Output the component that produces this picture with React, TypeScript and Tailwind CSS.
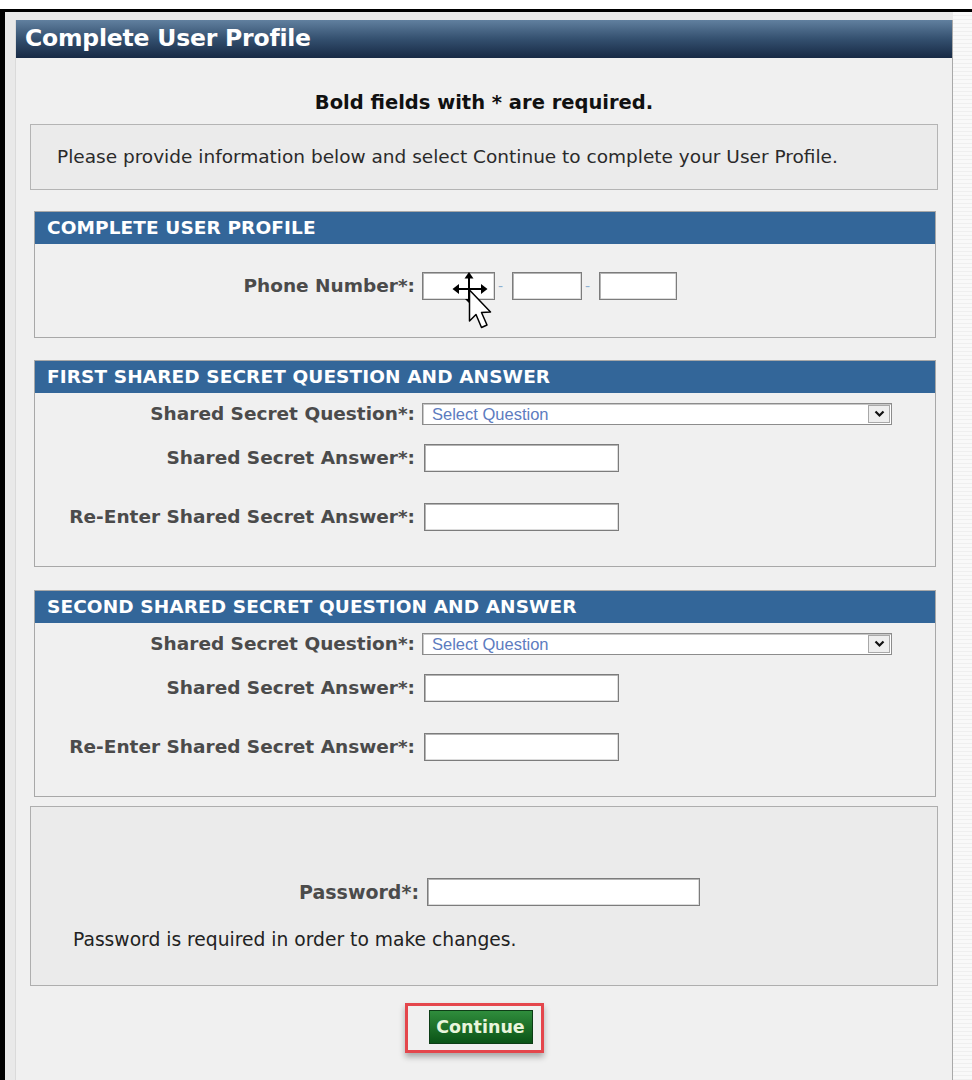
import React from "react";

function TextBox({ w }: { w: string }) {
  return (
    <div
      className={`${w} h-[28px] bg-white border border-[#7c7c7c] shadow-[inset_1px_1px_0_#b4b4b4,inset_-1px_-1px_0_#dcdcdc]`}
    />
  );
}

function QuestionSelect() {
  return (
    <div className="w-[470px] h-[22px] bg-white border border-[#8c8c8c] shadow-[inset_1px_1px_0_#c8c8c8] flex items-center">
      <span className="flex-1 pl-[9px] text-[16.5px] leading-[20px] text-[#5d7cbf] font-['Liberation_Sans',Arial,sans-serif]">
        Select Question
      </span>
      <div className="w-[22px] h-[18px] mr-[1px] bg-[#eeeeee] border border-[#a8a8a8] flex items-center justify-center">
        <svg width="11" height="8" viewBox="0 0 11 8">
          <path d="M1.5 1.5 L5.5 5.5 L9.5 1.5" fill="none" stroke="#111" strokeWidth="2.2" />
        </svg>
      </div>
    </div>
  );
}

function SectionHeader({ title }: { title: string }) {
  return (
    <div className="h-[32px] bg-[#336699] flex items-center pl-[12px] text-white text-[18.5px] font-bold tracking-[0.1px]">
      {title}
    </div>
  );
}

function Label({ children }: { children: React.ReactNode }) {
  return (
    <div className="w-[387px] shrink-0 whitespace-nowrap text-right text-[18.5px] leading-[22px] font-bold text-[#4b4b4b] pr-[7px]">
      {children}
    </div>
  );
}

function SecretSection({ title }: { title: string }) {
  return (
    <div className="ml-[18px] mr-[16px] border border-[#a8a8a8] bg-[#f0f0f0]">
      <SectionHeader title={title} />
      <div className="pt-[10px] pb-[35px] flex flex-col">
        <div className="flex items-center h-[22px]">
          <Label>Shared Secret Question*:</Label>
          <QuestionSelect />
        </div>
        <div className="flex items-center h-[28px] mt-[19px]">
          <Label>Shared Secret Answer*:</Label>
          <div className="ml-[2px]">
            <TextBox w="w-[195px]" />
          </div>
        </div>
        <div className="flex items-center h-[28px] mt-[31px]">
          <Label>Re-Enter Shared Secret Answer*:</Label>
          <div className="ml-[2px]">
            <TextBox w="w-[195px]" />
          </div>
        </div>
      </div>
    </div>
  );
}

export default function App() {
  return (
    <div className="h-[1080px] overflow-hidden bg-white pt-[9px] font-['DejaVu_Sans',Verdana,sans-serif]">
      <div className="flex h-[1071px] border-t-[3px] border-black">
        <div className="w-[953px] shrink-0 border-l-[5px] border-black bg-[#e9e9e9] pl-[10px] pt-[8px]">
          <div className="h-full bg-[#f0f0f0] border-l border-[#dadada] border-r border-r-[#a9a9a9] flex flex-col">
            {/* page title bar */}
            <div className="h-[38px] bg-gradient-to-b from-[#61809f] via-[#34506f] to-[#172a45] flex items-center pl-[9px] text-white text-[23.5px] font-bold tracking-[-0.2px]">
              Complete User Profile
            </div>

            <div className="mt-[36px] text-center text-[19.5px] leading-[18px] font-bold text-[#111]">
              Bold fields with * are required.
            </div>

            <div className="mt-[12px] ml-[14px] mr-[14px] h-[66px] bg-[#ebebeb] border border-[#b4b4b4] flex items-center pl-[26px] text-[18.5px] text-[#2a2a2a] whitespace-nowrap">
              Please provide information below and select Continue to complete your User Profile.
            </div>

            {/* phone number */}
            <div className="mt-[21px] ml-[18px] mr-[16px] border border-[#a8a8a8] bg-[#f0f0f0]">
              <SectionHeader title="COMPLETE USER PROFILE" />
              <div className="h-[93px] pt-[28px]">
                <div className="relative flex items-center h-[28px]">
                  <Label>Phone Number*:</Label>
                  <div className="flex items-center">
                    <TextBox w="w-[73px]" />
                    <span className="w-[17px] pr-[6px] text-center text-[14px] text-[#8fb0d0]">-</span>
                    <TextBox w="w-[70px]" />
                    <span className="w-[17px] pr-[6px] text-center text-[14px] text-[#8fb0d0]">-</span>
                    <TextBox w="w-[78px]" />
                  </div>
                  {/* move + arrow pointer over the first field */}
                  <svg
                    className="absolute left-[417px] top-0"
                    width="42"
                    height="60"
                    viewBox="0 0 42 60"
                  >
                    <path d="M4 17 H32" stroke="#000" strokeWidth="2" />
                    <path d="M0.5 17 L7 12 V22 Z M35.5 17 L29 12 V22 Z" fill="#000" />
                    <path d="M17 4 V28" stroke="#000" strokeWidth="2" />
                    <path d="M17 0 L12.5 6.5 H21.5 Z" fill="#000" />
                    <path d="M13 27 L17 31 L21 27 Z" fill="#000" />
                    <path
                      d="M17.5 18 V49 L24 42.5 L29.5 55.5 L35 53 L29.5 40.5 L38.5 40 Z"
                      fill="#fff"
                      stroke="#000"
                      strokeWidth="1.5"
                      strokeLinejoin="round"
                    />
                  </svg>
                </div>
              </div>
            </div>

            <div className="mt-[22px]">
              <SecretSection title="FIRST SHARED SECRET QUESTION AND ANSWER" />
            </div>
            <div className="mt-[23px]">
              <SecretSection title="SECOND SHARED SECRET QUESTION AND ANSWER" />
            </div>

            {/* password confirmation */}
            <div className="mt-[9px] ml-[14px] mr-[14px] h-[180px] bg-[#ebebeb] border border-[#aeaeae] pt-[71px]">
              <div className="flex items-center h-[28px]">
                <div className="w-[396px] whitespace-nowrap text-right text-[19px] font-bold text-[#4b4b4b] pr-[8px]">
                  Password*:
                </div>
                <TextBox w="w-[273px]" />
              </div>
              <div className="mt-[20px] pl-[42px] text-[18.7px] text-[#222] whitespace-nowrap">
                Password is required in order to make changes.
              </div>
            </div>

            <div className="mt-[17px] flex justify-center pr-[20px]">
              <div className="border-[3px] border-[#e4464c] pl-[21px] pr-[8px] pt-[4px] pb-[6px] shadow-[0_4px_6px_rgba(0,0,0,0.3)]">
                <button className="w-[104px] h-[34px] bg-gradient-to-b from-[#2f8d3c] to-[#0a5417] border border-[#0d3d16] text-[#e9f5dc] text-[17.5px] font-bold">
                  Continue
                </button>
              </div>
            </div>
          </div>
        </div>
        <div className="flex-1 bg-[repeating-linear-gradient(180deg,#f9f9f9_0px,#f9f9f9_3px,#efefef_3px,#efefef_4px)]" />
      </div>
    </div>
  );
}
